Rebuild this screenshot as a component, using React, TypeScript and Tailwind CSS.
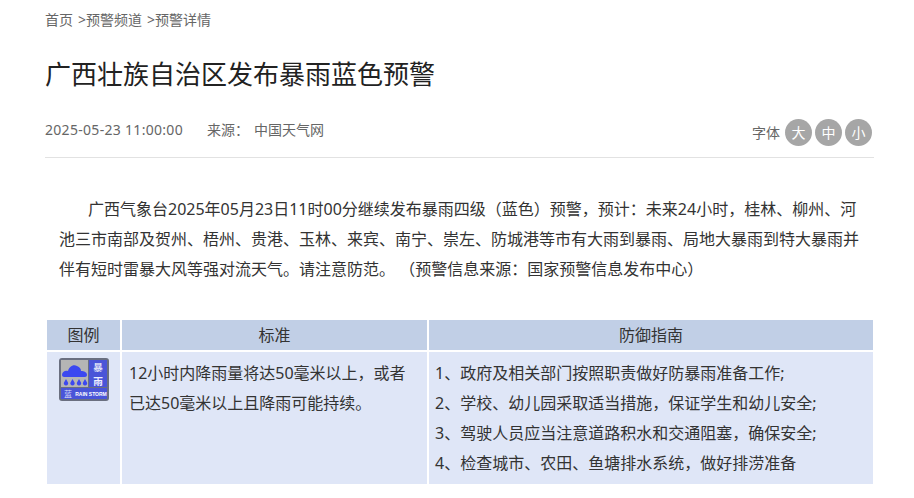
import React from 'react';

const guide = [
  '1、政府及相关部门按照职责做好防暴雨准备工作;',
  '2、学校、幼儿园采取适当措施，保证学生和幼儿安全;',
  '3、驾驶人员应当注意道路积水和交通阻塞，确保安全;',
  '4、检查城市、农田、鱼塘排水系统，做好排涝准备',
];

function RainIcon() {
  return (
    <svg width="50" height="43" viewBox="0 0 50 43">
      <rect width="50" height="43" rx="3" fill="#6a6f80" />
      <rect x="2" y="2" width="27" height="27" fill="#b5b5b5" />
      <rect x="30" y="2" width="18" height="27" fill="#4a55d8" />
      <rect x="2" y="30" width="46" height="11" fill="#4a55d8" />
      <path d="M3 17c0-3 3-5 6-4 1-4 5-7 9-5 3 1 4 3 4 5 3 0 6 1 6 4 0 1-1 2-2 2H5c-1 0-2-1-2-2z" fill="#3c48f0" />
      <path d="M7 21l2 3.500a2.200 2.200 0 1 1-4 0zM13.500 21l2 3.500a2.200 2.200 0 1 1-4 0zM20 21l2 3.500a2.200 2.200 0 1 1-4 0zM26 21l2 3.500a2.200 2.200 0 1 1-4 0z" fill="#3c48f0" />
      <text x="39" y="12.500" textAnchor="middle" fontSize="9.600" fontWeight="700" fill="#d8dcf5" fontFamily="'Noto Sans CJK SC', sans-serif">暴</text>
      <text x="39" y="26.500" textAnchor="middle" fontSize="9.600" fontWeight="700" fill="#eef0ff" fontFamily="'Noto Sans CJK SC', sans-serif">雨</text>
      <text x="9" y="39" textAnchor="middle" fontSize="8" fill="#d8dcf5" fontFamily="'Noto Sans CJK SC', sans-serif">蓝</text>
      <text x="32" y="38" textAnchor="middle" fontSize="5" fontWeight="700" fill="#ffffff" fontFamily="'Liberation Sans', sans-serif">RAIN STORM</text>
    </svg>
  );
}

export default function App() {
  return (
    <div className="h-[498px] w-[914px] overflow-hidden bg-white pl-[45px] pr-[40px] font-['Noto_Sans','Noto_Sans_CJK_SC',sans-serif] text-[#333]">
      {/* Breadcrumb */}
      <div className="flex h-[40px] items-center text-[14px] leading-[20px] text-[#666]">
        <span>首页</span>
        <span className="ml-[5px]">&gt;预警频道</span>
        <span className="ml-[5px]">&gt;预警详情</span>
      </div>

      <h1 className="mt-[13px] text-[26px] leading-[42px] font-normal text-[#222]">广西壮族自治区发布暴雨蓝色预警</h1>

      {/* Meta row */}
      <div className="mt-[16px] flex h-[47px] items-center justify-between border-b border-[#e2e2e2] text-[14px] leading-[20px] text-[#666]">
        <div className="mb-[9px] flex">
          <span className="tracking-[0.3px]">2025-05-23 11:00:00</span>
          <span className="ml-[24px]">来源：</span>
          <span className="ml-[5px]">中国天气网</span>
        </div>
        <div className="mb-[3px] mr-[2px] flex items-center">
          <span className="mr-[5px]">字体</span>
          <div className="flex gap-[3px]">
            {['大', '中', '小'].map((label) => (
              <span key={label} className="flex h-[27px] w-[27px] items-center justify-center rounded-full bg-[#a6a6a6] text-[14px] text-white">
                {label}
              </span>
            ))}
          </div>
        </div>
      </div>

      {/* Body */}
      <p className="mt-[36px] ml-[14px] w-[805px] indent-[29px] text-[16px] leading-[30px] text-[#333]">
        广西气象台2025年05月23日11时00分继续发布暴雨四级（蓝色）预警，预计：未来24小时，桂林、柳州、河池三市南部及贺州、梧州、贵港、玉林、来宾、南宁、崇左、防城港等市有大雨到暴雨、局地大暴雨到特大暴雨并伴有短时雷暴大风等强对流天气。请注意防范。 （预警信息来源：国家预警信息发布中心）
      </p>

      {/* Table */}
      <div className="mt-[36px] ml-[2px] grid w-[826px] grid-cols-[73px_305px_444px] gap-[2px] text-[16px] leading-[24px] text-[#333]">
        <div className="flex h-[30px] items-center justify-center bg-[#c1cfe6]">图例</div>
        <div className="flex h-[30px] items-center justify-center bg-[#c1cfe6]">标准</div>
        <div className="flex h-[30px] items-center justify-center bg-[#c1cfe6]">防御指南</div>
        <div className="flex h-[132px] justify-center bg-[#dfe6f7] pt-[6px]">
          <RainIcon />
        </div>
        <div className="h-[132px] bg-[#dfe6f7] px-[7px] py-[6px] leading-[30px]">
          12小时内降雨量将达50毫米以上，或者已达50毫米以上且降雨可能持续。
        </div>
        <div className="h-[132px] bg-[#dfe6f7] px-[6px] py-[6px] leading-[30px]">
          {guide.map((line) => (
            <div key={line}>{line}</div>
          ))}
        </div>
      </div>
    </div>
  );
}
